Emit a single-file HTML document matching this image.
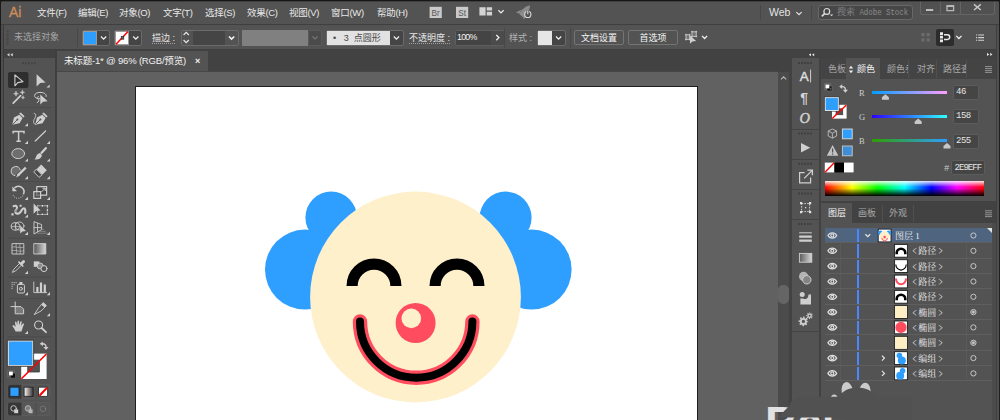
<!DOCTYPE html>
<html lang="zh-CN">
<head>
<meta charset="utf-8">
<title>Illustrator</title>
<style>
*{box-sizing:border-box;margin:0;padding:0}
html,body{width:1000px;height:420px;overflow:hidden;background:#535353}
body{position:relative;font-family:"Liberation Sans","Noto Sans CJK SC",sans-serif;font-size:11px;color:#e6e6e6;line-height:1}
.a{position:absolute}
.t{position:absolute;white-space:nowrap;line-height:14px;height:14px}
svg{position:absolute;overflow:visible}
/* frame */
#topline{left:0;top:0;width:1000px;height:2px;background:rgba(40,40,40,.45);border-top:1px solid #161616}
#leftline{left:0;top:0;width:1px;height:420px;background:#1c1c1c}
#leftstrip{left:1px;top:25px;width:3px;height:395px;background:#4e4e4e;border-right:1px solid #3a3a3a}
#rightstrip{left:996px;top:25px;width:3px;height:395px;background:#505050;border-left:1px solid #3f3f3f}
#menubar{left:0;top:1px;width:1000px;height:24px;background:#535353}
#sep1{left:0;top:24px;width:1000px;height:1px;background:#3f3f3f}
#ctrl{left:3px;top:25px;width:997px;height:24px;background:#535353}
#sep2{left:0;top:49px;width:1000px;height:1px;background:#3f3f3f}
#tabrow{left:3px;top:50px;width:997px;height:22px;background:#424242}
#canvas{left:57px;top:72px;width:721px;height:348px;background:#616161}
#artboard{left:135px;top:86px;width:563px;height:340px;background:#fff;border:1px solid #1e1e1e}
#doctab{left:57px;top:51px;width:151px;height:20px;background:#535353}
/* tools */
#tools{left:4px;top:58px;width:52px;height:362px;background:#535353}
#toolsgap{left:55px;top:50px;width:2px;height:370px;background:#3f3f3f}

.dim{color:#a6a6a6}
.f9{font-size:9px}
.box{position:absolute;border:1px solid #6b6b6b;border-radius:2px}
.dk{position:absolute;background:#454545}
.br{display:inline-block;transform:scale(.8,1.45);margin:0 1.4px 0 0.4px}
.br+.br,.t .br:last-child{margin:0 0 0 1.6px}
.chev{position:absolute;width:5px;height:5px}
.menu{top:6px;font-size:9.5px;color:#e8e8e8;letter-spacing:-0.3px}
</style>
</head>
<body>
<div class="a" id="menubar"></div>
<div class="a" id="ctrl"></div>
<div class="a" id="tabrow"></div>
<div class="a" id="canvas"></div>
<div class="a" id="artboard"></div>
<div class="a" id="doctab"></div>
<div class="a" id="tools"></div>
<div class="a" id="toolsgap"></div>
<div class="a" id="sep1"></div>
<div class="a" id="sep2"></div>
<div class="a" id="leftline"></div>
<div class="a" id="leftstrip"></div>

<!-- MENU -->
<div class="t" style="left:9px;top:2px;font-size:15.5px;line-height:18px;height:18px;color:#cb8c5c;letter-spacing:0;top:3px;transform:scaleX(.9);transform-origin:0 50%;-webkit-text-stroke:.35px #cb8c5c">Ai</div>
<div class="t menu" style="left:37px">文件(F)</div>
<div class="t menu" style="left:78px">编辑(E)</div>
<div class="t menu" style="left:119px">对象(O)</div>
<div class="t menu" style="left:163px">文字(T)</div>
<div class="t menu" style="left:205px">选择(S)</div>
<div class="t menu" style="left:247px">效果(C)</div>
<div class="t menu" style="left:289px">视图(V)</div>
<div class="t menu" style="left:331px">窗口(W)</div>
<div class="t menu" style="left:377px">帮助(H)</div>


<!-- top-right -->
<div class="a" style="left:760px;top:5px;width:1px;height:15px;background:#474747"></div>
<div class="a" style="left:811px;top:5px;width:1px;height:15px;background:#474747"></div>
<div class="t" style="left:769px;top:5px;font-size:10.5px;color:#e4e4e4">Web</div>
<div class="a" style="left:818px;top:5px;width:95px;height:15px;background:#474747;border:1px solid #686868;border-radius:3px"></div>
<div class="t" style="left:837px;top:6px;font-size:9px;color:#8c8c8c;font-family:'Liberation Mono','Noto Serif CJK SC',monospace">搜索<span style="display:inline-block;transform:scaleX(.82);transform-origin:0 50%;white-space:pre"> Adobe Stock</span></div>
<div class="a" style="left:920px;top:0;width:75px;height:15px;background:#515151;border:1px solid #656565;border-top:none;border-radius:0 0 3px 3px"></div>
<div class="a" style="left:940px;top:0;width:1px;height:14px;background:#646464"></div>
<div class="a" style="left:960px;top:0;width:1px;height:14px;background:#646464"></div>

<!-- CONTROL BAR -->
<div class="t dim f9" style="left:14px;top:30px">未选择对象</div>
<div class="box" style="left:82px;top:30px;width:28px;height:16px;background:#454545"></div>
<div class="a" style="left:83px;top:31px;width:14px;height:14px;background:#2e9eff;border:1px solid #9a9a9a"></div>
<div class="box" style="left:114px;top:30px;width:28px;height:16px;background:#454545"></div>
<div class="a" style="left:115px;top:31px;width:14px;height:14px;background:#fff;border:1px solid #9a9a9a"></div>
<div class="t f9" style="left:152px;top:31px;border-bottom:1px dotted #a0a0a0;height:12.5px">描边 :</div>
<div class="box" style="left:181px;top:30px;width:58px;height:16px;background:#535353"></div>
<div class="dk" style="left:193px;top:31px;width:32px;height:14px"></div>
<div class="a" style="left:242px;top:30px;width:66px;height:16px;background:#808080"></div>
<div class="box" style="left:308px;top:30px;width:14px;height:16px;background:#4b4b4b;border-color:#5a5a5a"></div>
<div class="box" style="left:326px;top:30px;width:78px;height:16px;background:#454545"></div>
<div class="a" style="left:327px;top:31px;width:63px;height:14px;background:#e2e2e2"></div>
<div class="t f9" style="left:333px;top:31px;color:#484848">•&nbsp;&nbsp; 3&nbsp; 点圆形</div>
<div class="t f9" style="left:409px;top:31px;border-bottom:1px dotted #a0a0a0;height:12.5px">不透明度 :</div>
<div class="box" style="left:455px;top:30px;width:50px;height:16px;background:#4b4b4b;border-color:#5e5e5e"></div><div class="a" style="left:456px;top:31px;width:35px;height:14px;background:#444"></div>
<div class="t" style="left:457px;top:30px;font-size:8.8px;letter-spacing:-0.75px;color:#f4f4f4">100%</div>
<div class="a" style="left:504px;top:28px;width:1px;height:20px;background:#474747"></div>
<div class="t f9" style="left:509px;top:31px;color:#b4b4b4">样式 :</div>
<div class="box" style="left:537px;top:30px;width:29px;height:16px;background:#454545"></div>
<div class="a" style="left:538px;top:31px;width:14px;height:14px;background:#e6e6e6"></div>
<div class="a" style="left:570px;top:28px;width:1px;height:20px;background:#474747"></div>
<div class="box" style="left:574px;top:30px;width:50px;height:15px;border-color:#747474"></div>
<div class="t f9" style="left:574px;top:31px;width:50px;text-align:center;color:#f4f4f4">文档设置</div>
<div class="box" style="left:628px;top:30px;width:50px;height:15px;border-color:#747474"></div>
<div class="t f9" style="left:628px;top:31px;width:50px;text-align:center;color:#f4f4f4">首选项</div>
<div class="a" style="left:936px;top:29px;width:18px;height:17px;background:#2c2c2c;border-radius:2px"></div>

<!-- DOC TAB -->
<div class="t" style="left:64px;top:54px;font-size:9.5px;color:#f2f2f2;letter-spacing:-0.18px">未标题-1* @ 96% (RGB/预览)</div>
<div class="t" style="left:195px;top:54px;font-size:9px;font-weight:bold;color:#f2f2f2">×</div>
<div class="a" style="left:57px;top:71px;width:721px;height:1px;background:#474747"></div>

<!-- RIGHT SIDE -->
<div class="a" style="left:778px;top:72px;width:11px;height:348px;background:#4b4b4b"></div>
<div class="a" style="left:778px;top:285px;width:11px;height:19px;background:#656565;border-radius:5px"></div>
<div class="a" style="left:789px;top:50px;width:3px;height:370px;background:#424242"></div>
<div class="a" style="left:792px;top:58px;width:27px;height:362px;background:#535353"></div>
<div class="a" style="left:792px;top:129px;width:27px;height:1px;background:#444"></div>
<div class="a" style="left:792px;top:159px;width:27px;height:1px;background:#444"></div>
<div class="a" style="left:792px;top:189px;width:27px;height:1px;background:#444"></div>
<div class="a" style="left:792px;top:219px;width:27px;height:1px;background:#444"></div>
<div class="a" style="left:792px;top:331px;width:27px;height:1px;background:#444"></div>
<div class="a" style="left:819px;top:50px;width:2px;height:370px;background:#424242"></div>
<!-- color panel -->
<div class="a" style="left:821px;top:58px;width:179px;height:21px;background:#444"></div>
<div class="a" style="left:821px;top:79px;width:179px;height:122px;background:#535353"></div>
<div class="a" style="left:846px;top:58px;width:34px;height:22px;background:#535353"></div>
<div class="a" style="left:821px;top:201px;width:179px;height:2px;background:#424242"></div>
<div class="a" style="left:908px;top:60px;width:1px;height:18px;background:#505050"></div>
<div class="a" style="left:936px;top:60px;width:1px;height:18px;background:#505050"></div>
<div class="a" style="left:966px;top:60px;width:1px;height:18px;background:#505050"></div>
<div class="t f9" style="left:828px;top:62px;color:#a8a8a8">色板</div>
<div class="t f9" style="left:857px;top:62px;color:#f4f4f4">颜色</div>
<div class="t f9" style="left:887px;top:62px;color:#a8a8a8;width:21px;overflow:hidden">颜色参</div>
<div class="t f9" style="left:917px;top:62px;color:#a8a8a8">对齐</div>
<div class="t f9" style="left:943px;top:62px;color:#a8a8a8;width:23px;overflow:hidden">路径查</div>
<div class="t" style="left:859px;top:86px;font-size:8.5px;color:#cdcdcd;font-family:'Liberation Serif',serif">R</div>
<div class="t" style="left:859px;top:110px;font-size:8.5px;color:#cdcdcd;font-family:'Liberation Serif',serif">G</div>
<div class="t" style="left:859px;top:134px;font-size:8.5px;color:#cdcdcd;font-family:'Liberation Serif',serif">B</div>
<div class="a" style="left:872px;top:91px;width:75px;height:3px;background:linear-gradient(90deg,#009eff,#ff9eff)"></div>
<div class="a" style="left:872px;top:115px;width:75px;height:3px;background:linear-gradient(90deg,#2e00ff,#2effff)"></div>
<div class="a" style="left:872px;top:139px;width:75px;height:3px;background:linear-gradient(90deg,#2e9e00,#2e9eff)"></div>
<div class="box" style="left:953px;top:85px;width:26px;height:15px;background:#454545;border-color:#5c5c5c"></div>
<div class="box" style="left:953px;top:109px;width:26px;height:15px;background:#454545;border-color:#5c5c5c"></div>
<div class="box" style="left:953px;top:134px;width:26px;height:15px;background:#454545;border-color:#5c5c5c"></div>
<div class="t f9" style="left:956px;top:85px;font-family:'Liberation Mono',monospace;letter-spacing:-0.5px">46</div>
<div class="t f9" style="left:956px;top:109px;font-family:'Liberation Mono',monospace;letter-spacing:-0.5px">158</div>
<div class="t f9" style="left:956px;top:134px;font-family:'Liberation Mono',monospace;letter-spacing:-0.5px">255</div>
<div class="t f9" style="left:944px;top:162px;font-family:'Liberation Mono',monospace;color:#c8c8c8">#</div>
<div class="box" style="left:951px;top:160px;width:34px;height:15px;background:#454545;border-color:#5c5c5c"></div>
<div class="t f9" style="left:954.5px;top:161px;font-family:'Liberation Mono',monospace;letter-spacing:-0.95px">2E9EFF</div>
<div class="a" style="left:825px;top:181px;width:159px;height:15px;background:linear-gradient(180deg,rgba(255,255,255,.9) 0%,rgba(255,255,255,0) 40%,rgba(0,0,0,0) 48%,#000 100%),linear-gradient(90deg,#f00 0%,#ff0 17%,#0f0 33%,#0ff 50%,#00f 67%,#f0f 83%,#f00 100%)"></div>
<!-- layers panel -->
<div class="a" style="left:821px;top:203px;width:179px;height:20px;background:#424242"></div>
<div class="a" style="left:821px;top:203px;width:31px;height:20px;background:#535353"></div>
<div class="a" style="left:882px;top:205px;width:1px;height:17px;background:#505050"></div>
<div class="a" style="left:913px;top:205px;width:1px;height:17px;background:#505050"></div>
<div class="a" style="left:821px;top:223px;width:179px;height:197px;background:#535353"></div>
<div class="a" style="left:992px;top:223px;width:8px;height:197px;background:#4b4b4b"></div>
<div class="t f9" style="left:828px;top:206px;color:#f4f4f4">图层</div>
<div class="t f9" style="left:858px;top:206px;color:#a8a8a8">画板</div>
<div class="t f9" style="left:889px;top:206px;color:#a8a8a8">外观</div>
<div class="a" style="left:825px;top:228px;width:167px;height:15px;background:#4f647f;border-bottom:1px solid #5f5f5f"></div>
<div class="a" style="left:857px;top:229px;width:2px;height:13px;background:#4a86ff"></div>
<div class="t f9" style="left:895px;top:229px;color:#f0f0f0;font-family:'Liberation Serif','Noto Serif CJK SC',serif">图层 1</div>
<div class="a" style="left:825px;top:243px;width:167px;height:16px;background:#535353;border-bottom:1px solid #5f5f5f"></div>
<div class="a" style="left:857px;top:244px;width:2px;height:14px;background:#4a86ff"></div>
<div class="t f9" style="left:911.5px;top:244px;color:#ececec;font-family:'Liberation Serif','Noto Serif CJK SC',serif"><span class="br">&lt;</span>路径<span class="br">&gt;</span></div>
<div class="a" style="left:825px;top:259px;width:167px;height:15px;background:#535353;border-bottom:1px solid #5f5f5f"></div>
<div class="a" style="left:857px;top:260px;width:2px;height:13px;background:#4a86ff"></div>
<div class="t f9" style="left:911.5px;top:260px;color:#ececec;font-family:'Liberation Serif','Noto Serif CJK SC',serif"><span class="br">&lt;</span>路径<span class="br">&gt;</span></div>
<div class="a" style="left:825px;top:274px;width:167px;height:15px;background:#535353;border-bottom:1px solid #5f5f5f"></div>
<div class="a" style="left:857px;top:275px;width:2px;height:13px;background:#4a86ff"></div>
<div class="t f9" style="left:911.5px;top:275px;color:#ececec;font-family:'Liberation Serif','Noto Serif CJK SC',serif"><span class="br">&lt;</span>路径<span class="br">&gt;</span></div>
<div class="a" style="left:825px;top:289px;width:167px;height:16px;background:#535353;border-bottom:1px solid #5f5f5f"></div>
<div class="a" style="left:857px;top:290px;width:2px;height:14px;background:#4a86ff"></div>
<div class="t f9" style="left:911.5px;top:290px;color:#ececec;font-family:'Liberation Serif','Noto Serif CJK SC',serif"><span class="br">&lt;</span>路径<span class="br">&gt;</span></div>
<div class="a" style="left:825px;top:305px;width:167px;height:15px;background:#535353;border-bottom:1px solid #5f5f5f"></div>
<div class="a" style="left:857px;top:306px;width:2px;height:13px;background:#4a86ff"></div>
<div class="t f9" style="left:911.5px;top:306px;color:#ececec;font-family:'Liberation Serif','Noto Serif CJK SC',serif"><span class="br">&lt;</span>椭圆<span class="br">&gt;</span></div>
<div class="a" style="left:825px;top:320px;width:167px;height:15px;background:#535353;border-bottom:1px solid #5f5f5f"></div>
<div class="a" style="left:857px;top:321px;width:2px;height:13px;background:#4a86ff"></div>
<div class="t f9" style="left:911.5px;top:321px;color:#ececec;font-family:'Liberation Serif','Noto Serif CJK SC',serif"><span class="br">&lt;</span>椭圆<span class="br">&gt;</span></div>
<div class="a" style="left:825px;top:335px;width:167px;height:16px;background:#535353;border-bottom:1px solid #5f5f5f"></div>
<div class="a" style="left:857px;top:336px;width:2px;height:14px;background:#4a86ff"></div>
<div class="t f9" style="left:911.5px;top:336px;color:#ececec;font-family:'Liberation Serif','Noto Serif CJK SC',serif"><span class="br">&lt;</span>椭圆<span class="br">&gt;</span></div>
<div class="a" style="left:825px;top:351px;width:167px;height:15px;background:#535353;border-bottom:1px solid #5f5f5f"></div>
<div class="a" style="left:857px;top:352px;width:2px;height:13px;background:#4a86ff"></div>
<div class="t f9" style="left:911.5px;top:352px;color:#ececec;font-family:'Liberation Serif','Noto Serif CJK SC',serif"><span class="br">&lt;</span>编组<span class="br">&gt;</span></div>
<div class="a" style="left:825px;top:366px;width:167px;height:15px;background:#535353;border-bottom:1px solid #5f5f5f"></div>
<div class="a" style="left:857px;top:367px;width:2px;height:13px;background:#4a86ff"></div>
<div class="t f9" style="left:911.5px;top:367px;color:#ececec;font-family:'Liberation Serif','Noto Serif CJK SC',serif"><span class="br">&lt;</span>编组<span class="br">&gt;</span></div>
<div class="a" style="left:840px;top:228px;width:1px;height:153px;background:#5f5f5f;opacity:.6"></div>
<div class="a" style="left:966px;top:228px;width:1px;height:153px;background:#5f5f5f;opacity:.6"></div>

<svg width="1000" height="420" viewBox="0 0 1000 420" style="left:0;top:0">
<defs>
<clipPath id="cv"><rect x="57" y="72" width="721" height="348"/></clipPath>
<linearGradient id="gr1" x1="0" x2="1" y1="0" y2="0"><stop offset="0" stop-color="#5a5a5a"/><stop offset="1" stop-color="#d8d8d8"/></linearGradient>
<linearGradient id="gr2" x1="0" x2="1" y1="0" y2="0"><stop offset="0" stop-color="#f4f4f4"/><stop offset="1" stop-color="#3a2f2f"/></linearGradient>
</defs>
<!-- ARTWORK -->
<g id="art" clip-path="url(#cv)">
<circle cx="331.2" cy="217.4" r="25.8" fill="#2e9eff"/>
<circle cx="305" cy="269.6" r="40" fill="#2e9eff"/>
<circle cx="505.6" cy="217.6" r="26" fill="#2e9eff"/>
<circle cx="531.6" cy="269.6" r="40" fill="#2e9eff"/>
<circle cx="415.5" cy="297" r="105.4" fill="#fff0cc"/>
<path d="M352.1,286 A21.9,21.9 0 0 1 395.9,286" fill="none" stroke="#000" stroke-width="11.2"/>
<path d="M435.1,286 A21.9,21.9 0 0 1 478.9,286" fill="none" stroke="#000" stroke-width="11.2"/>
<circle cx="415.6" cy="323" r="20" fill="#ff4d5f"/>
<circle cx="411.3" cy="318.4" r="9.8" fill="#fff0cc"/>
<path d="M360,321.5 A56.2,56.2 0 0 0 472.4,321.5" fill="none" stroke="#ff4d5f" stroke-width="14.4" stroke-linecap="round"/>
<path d="M360,321.5 A56.2,56.2 0 0 0 472.4,321.5" fill="none" stroke="#000" stroke-width="8" stroke-linecap="round"/>
</g>
<!-- TOOLS -->
<g id="tools-ic" fill="none" stroke="#cfcfcf" stroke-width="1.1" stroke-linejoin="round" stroke-linecap="round">
<g fill="#cfcfcf" stroke="none">
<path d="M9.5,53 L7,54.7 L9.5,56.4 Z M12.8,53 L10.3,54.7 L12.8,56.4 Z"/>
</g>
<path d="M22,63.2 H36" stroke="#454545" stroke-width="2" stroke-dasharray="2 1" stroke-linecap="butt"/>
<rect x="8" y="72" width="20.5" height="16" rx="2" fill="#2e2e2e" stroke="none"/>
<path d="M14.9,74.8 V85.8 L17.8,82.6 L23,81.6 Z"/>
<path d="M36.6,74.2 V86.4 L40.2,83 L45.6,82.4 Z" fill="#cfcfcf" stroke="none"/>
<!-- wand -->
<path d="M13.2,103.2 L20.6,95.6" stroke-width="1.7"/>
<path d="M16,91.39999999999999 Q16,93.8 18.4,93.8 Q16,93.8 16,96.2 Q16,93.8 13.6,93.8 Q16,93.8 16,91.39999999999999 Z M22.4,90.2 Q22.4,92.4 24.599999999999998,92.4 Q22.4,92.4 22.4,94.60000000000001 Q22.4,92.4 20.2,92.4 Q22.4,92.4 22.4,90.2 Z M23,96.1 Q23,97.6 24.5,97.6 Q23,97.6 23,99.1 Q23,97.6 21.5,97.6 Q23,97.6 23,96.1 Z" fill="#cfcfcf" stroke="#cfcfcf" stroke-width="0.5"/>
<!-- lasso -->
<path d="M39.5,98.6 C36,98.8 34.4,97.2 34.6,95.4 C34.9,93.2 38,92.2 41,92.4 C44.4,92.6 46.6,94.2 46.2,96.4 M38.6,96.6 C37,96.4 36.6,98.6 38.2,99 C39.6,99.4 39.2,101.8 37.2,102.6" stroke-width="1"/>
<path d="M40.3,94.4 V104.4 L43,101.8 L47.6,101.2 Z" fill="#cfcfcf" stroke="none"/>
<path d="M7.5,107.5 H51" stroke="#4b4b4b" stroke-width="1"/>
<!-- pen -->
<g id="pen" fill="#cfcfcf" stroke="none">
<path d="M12.2,124.8 L14,117.6 L19.4,114.8 L22.6,118 L19.6,123.2 Z M19.2,113.6 L20.8,112.4 L24.6,116.2 L23.4,117.6 Z"/>
<path d="M12.6,124.4 L17,120" stroke="#535353" stroke-width="0.9"/>
<circle cx="17.4" cy="119.6" r="1" fill="#535353"/>
</g>
<use href="#pen" x="23" y="0"/>
<path d="M34.2,113.4 C36.2,113.2 36.2,116 34.6,118.6 C33,121.4 33.2,124 35.6,124.4" stroke-width="0.9"/>
<!-- T -->
<path d="M13.2,133.6 V131.4 H24 V133.6 M18.6,131.4 V141 M16.4,141.2 H20.8" stroke-width="1.5" stroke-linecap="butt" stroke-linejoin="miter"/>
<path d="M35.2,141 L45.6,131" stroke-width="1.2"/>
<!-- ellipse -->
<ellipse cx="18.2" cy="153.6" rx="6.4" ry="5" fill="#6e6e6e" stroke-width="1"/>
<!-- brush -->
<path d="M45.8,148.2 L41.6,152.8" stroke-width="2.3"/>
<path d="M40.4,153.4 L42,155.2 C41.6,158.4 38.4,159.8 34.4,159.4 C36,158.4 35.8,156.6 36.8,155.2 C37.8,153.8 39.2,153.2 40.4,153.4 Z" fill="#cfcfcf" stroke="none"/>
<!-- shaper -->
<path d="M20.2,170 A4.6,4.6 0 1 0 15,175.6" fill="#6e6e6e" stroke-width="1"/>
<path d="M25.8,167.6 L17.8,175.4" stroke-width="2.2" stroke-linecap="butt"/>
<path d="M18,173.8 L19.8,175.6 L16,177.4 Z" fill="#cfcfcf" stroke="none"/>
<!-- eraser -->
<path d="M41.2,164.6 L46.8,170.2 L42.2,174.8 L36.6,169.2 Z" fill="#cfcfcf" stroke="none"/>
<path d="M36.6,169.4 L42,174.8 L39.2,177.4 L34,172.2 Z" fill="#535353" stroke="#cfcfcf" stroke-width="0.9"/>
<path d="M36.6,171.4 L39.8,174.6 L38.8,175.6 L35.6,172.4 Z" fill="#3e3e3e" stroke="none"/>
<path d="M7.5,181.5 H51" stroke="#4b4b4b" stroke-width="1"/>
<!-- rotate -->
<path d="M14.4,188 A5.6,5.6 0 0 1 23.4,194.4" stroke-width="1.5" stroke-linecap="butt"/>
<path d="M22.8,195.6 A5.6,5.6 0 0 1 12.8,194.6" stroke-width="1.1" stroke-dasharray="0.9 1.3" stroke-linecap="butt" opacity=".75"/>
<path d="M12.4,186.4 V191.2 H17 Z" fill="#cfcfcf" stroke="none"/>
<!-- scale -->
<rect x="36.8" y="186.6" width="9.8" height="8.6" stroke-width="1.2" fill="#474747"/>
<rect x="33.8" y="191.6" width="6.8" height="6.8" stroke-width="1.2" fill="#535353"/>
<path d="M36.8,195.2 V191.6 M40.6,195.2 H36.8" stroke-width="0.8" opacity=".6"/>
<path d="M41.6,191.8 L45,188.4 M42.8,188.2 H45.2 V190.6" stroke-width="1"/>
<!-- width tool -->
<path d="M13.6,206.2 C16.8,204.4 18.2,208 15.8,210.4 C14,212.4 16.4,214.4 19,213.2 C21.8,211.8 21.4,208.4 23.8,208.4 C25.6,208.4 25.4,211 25.2,213" stroke-width="2.1"/>
<path d="M13,213.6 L20.4,206.2" stroke-width="0.8" stroke="#535353"/><path d="M11.4,213.2 h2.2 v2.2 h-2.2 Z M19.6,204.8 h2 v2 h-2 Z" fill="#cfcfcf" stroke="none"/>
<!-- free transform -->
<rect x="37.6" y="205.8" width="9.8" height="8.6" stroke-width="0.9" stroke-dasharray="2 1.3" stroke="#bdbdbd"/>
<path d="M46.7,205.1 h1.4 v1.4 h-1.4 Z M46.7,209.4 h1.4 v1.4 h-1.4 Z M46.7,213.7 h1.4 v1.4 h-1.4 Z M41.8,205.1 h1.4 v1.4 h-1.4 Z M41.8,213.7 h1.4 v1.4 h-1.4 Z M36.9,213.7 h1.4 v1.4 h-1.4 Z" fill="#e4e4e4" stroke="none"/>
<path d="M33.6,203.6 V213.8 L36.4,211 L40.6,210.4 Z" fill="#cfcfcf" stroke="none"/>
<!-- shape builder -->
<ellipse cx="15.6" cy="226.4" rx="4.4" ry="3.8" stroke-width="0.9"/>
<ellipse cx="19.6" cy="226" rx="4.4" ry="4" stroke-width="0.9"/>
<path d="M11.4,226.6 H19 M15.6,222.8 V230" stroke-width="0.7"/>
<path d="M20.2,225.6 V233.4 L22.4,231.4 L26,231 Z" fill="#cfcfcf" stroke="none"/>
<!-- perspective -->
<path d="M34,222 V234 L41.6,229.6 V225 Z M34,227.6 H41.6 M37.6,223.4 V231.8" stroke-width="0.9"/>
<path d="M39.6,231.4 H45.4 M37,233.2 H47.4 M42,229.6 H43.6" stroke-width="0.6" stroke="#a0a0a0"/>
<path d="M7.5,238.2 H51" stroke="#4b4b4b" stroke-width="1"/>
<!-- mesh -->
<rect x="12.4" y="243.6" width="11.4" height="10.4" stroke-width="0.9"/>
<path d="M12.4,247 C16,246 20,249 23.8,247 M12.4,250.6 C16,249.6 20,252.6 23.8,250.6 M16.2,243.6 C15.2,247 17.6,250 16.2,254 M20,243.6 C19,247 21.4,250 20,254" stroke-width="0.6"/>
<rect x="34.2" y="243.6" width="11.6" height="10.4" fill="url(#gr1)" stroke-width="0.9"/>
<!-- eyedropper -->
<path d="M19.8,263.2 L13.8,269.2 L12.4,272.4 L15.6,271 L21.6,265" stroke-width="0.9"/>
<path d="M19,262.2 L22.8,266" stroke-width="1.7"/><path d="M21.4,263.8 L23.6,261.6" stroke-width="2.8"/>
<!-- blend -->
<rect x="33.8" y="261.4" width="5.6" height="5.4" fill="#cfcfcf" stroke="none"/>
<circle cx="40.2" cy="266" r="3" fill="#8a8a8a" stroke-width="0.9"/>
<circle cx="44" cy="268.6" r="3" fill="#535353" stroke-width="1"/>
<path d="M7.5,277.2 H51" stroke="#4b4b4b" stroke-width="1"/>
<!-- sprayer -->
<rect x="17.4" y="284.4" width="7" height="8.6" rx="1" stroke-width="1"/>
<rect x="19.4" y="282" width="3" height="2.4" fill="#cfcfcf" stroke="none"/>
<circle cx="20.9" cy="288.8" r="1.5" stroke-width="0.9"/>
<path d="M11.6,282.6 h1 M13.6,282.6 h1 M15.6,282.6 h1 M11.6,284.6 h1 M13.6,284.6 h1 M11.6,286.6 h1 M11.6,288.4 h1" stroke-width="1" stroke-linecap="butt"/>
<!-- graph -->
<path d="M33.8,281.6 V292.6 H47" stroke-width="0.9" stroke-linecap="butt"/>
<path d="M37.4,292.4 V287 M41,292.4 V282.4 M44.8,292.4 V284.6" stroke-width="2.2" stroke-linecap="butt"/>
<path d="M7.5,298.5 H51" stroke="#4b4b4b" stroke-width="1"/>
<!-- artboard -->
<path d="M15.2,313.4 V306.6 H21 L23.6,309.2 V313.4 Z" fill="#7a7a7a" stroke-width="1"/>
<path d="M15.2,302 V307 M11,306.6 H16" stroke-width="1"/>
<!-- slice -->
<path d="M43.4,302.8 L46.4,305.6 L41,311 L34.2,314.6 L38.4,308.2 Z" stroke-width="0.9"/>
<path d="M43.4,302.8 L46.4,305.6 L44.4,307.6 L41.4,304.8 Z" fill="#cfcfcf" stroke="none"/>
<!-- hand -->
<path d="M15.6,331.4 C14.6,329 13.6,327.6 12.6,326.4 C12.2,325.4 13.4,324.8 14.2,325.6 L15.6,327 L15,322.4 C14.9,321.4 16.3,321.2 16.5,322.2 L17.2,325.2 L17.5,321.2 C17.6,320.2 19,320.2 19,321.2 L19.1,325.2 L20.3,321.8 C20.6,320.9 21.9,321.3 21.7,322.2 L21,326 L22.6,323.8 C23.2,323 24.4,323.7 23.9,324.6 C22.6,327.2 22.4,329.4 21.4,331.4 Z" fill="#cfcfcf" stroke="none"/>
<!-- zoom -->
<circle cx="38.6" cy="325" r="4" stroke-width="1.1"/>
<path d="M41.6,328 L46,332.2" stroke-width="1.8"/>
<path d="M7.5,336.8 H51" stroke="#4b4b4b" stroke-width="1"/>
<g fill="#cfcfcf" stroke="none"><path d="M49.7,84.39999999999999 V87.6 H46.5 Z" fill="#cfcfcf"/><path d="M28,123.1 V126.3 H24.8 Z" fill="#cfcfcf"/><path d="M28,140.8 V144 H24.8 Z" fill="#cfcfcf"/><path d="M50,140.8 V144 H46.8 Z" fill="#cfcfcf"/><path d="M28,158.4 V161.6 H24.8 Z" fill="#cfcfcf"/><path d="M50,158.4 V161.6 H46.8 Z" fill="#cfcfcf"/><path d="M28,176.0 V179.2 H24.8 Z" fill="#cfcfcf"/><path d="M50,176.0 V179.2 H46.8 Z" fill="#cfcfcf"/><path d="M28,196.8 V200 H24.8 Z" fill="#cfcfcf"/><path d="M50,196.8 V200 H46.8 Z" fill="#cfcfcf"/><path d="M28,214.4 V217.6 H24.8 Z" fill="#cfcfcf"/><path d="M28,231.8 V235 H24.8 Z" fill="#cfcfcf"/><path d="M50,231.8 V235 H46.8 Z" fill="#cfcfcf"/><path d="M28,270.8 V274 H24.8 Z" fill="#cfcfcf"/><path d="M28,292.0 V295.2 H24.8 Z" fill="#cfcfcf"/><path d="M50,292.0 V295.2 H46.8 Z" fill="#cfcfcf"/><path d="M50,313.0 V316.2 H46.8 Z" fill="#cfcfcf"/><path d="M28,330.8 V334 H24.8 Z" fill="#cfcfcf"/></g>
<!-- fill / stroke -->
<rect x="21.2" y="353.6" width="25.4" height="25.4" fill="#fff" stroke="none"/>
<rect x="28" y="360.2" width="11.4" height="11.8" fill="#535353" stroke="#3a3a3a" stroke-width="0.8"/>
<path d="M46.4,354 L21.4,378.8" stroke="#f00" stroke-width="1.6" stroke-linecap="butt"/>
<rect x="7.6" y="340.2" width="26" height="26.2" fill="#d4d4d4" stroke="#333" stroke-width="0.8"/>
<rect x="9" y="341.6" width="23.2" height="23.4" fill="#2e9eff" stroke="none"/>
<path d="M42.2,343.8 Q46,343.6 46,347.2" stroke-width="1.4"/><path d="M39.8,343.8 L42.8,341.4 V346.2 Z M46,350 L43.4,347 H48.6 Z" fill="#cfcfcf" stroke="none"/>
<rect x="7.8" y="370.4" width="6.5" height="6.5" fill="none" stroke="#6c6c6c" stroke-width="0.7"/><rect x="10.5" y="373.2" width="5" height="5" fill="#0c0c0c" stroke="#6c6c6c" stroke-width="0.7"/><rect x="9" y="371.6" width="3.8" height="3.8" fill="#fff" stroke="none"/>
<!-- color mode -->
<rect x="8" y="384.8" width="42" height="14" rx="2" fill="#565656" stroke="#5f5f5f" stroke-width="0.8"/>
<path d="M8,386.8 a2,2 0 0 1 2,-2 H21.4 V398.8 H10 a2,2 0 0 1 -2,-2 Z" fill="#363636" stroke="none"/>
<path d="M36,385 V398.6" stroke="#4a4a4a" stroke-width="0.8"/>
<rect x="10.2" y="387.2" width="8.8" height="9.2" fill="#2e9eff" stroke="#222" stroke-width="0.8"/>
<rect x="24.4" y="387.2" width="8.8" height="9.2" fill="url(#gr2)" stroke="#222" stroke-width="0.8"/>
<rect x="38.8" y="387.2" width="8.8" height="9.2" fill="#fff" stroke="#222" stroke-width="0.8"/>
<path d="M39.4,395.8 L47,387.8" stroke="#f00" stroke-width="2" stroke-linecap="butt"/>
<!-- draw mode -->
<rect x="8" y="402.6" width="42" height="13" rx="2" fill="#565656" stroke="#5f5f5f" stroke-width="0.8"/>
<path d="M8,404.6 a2,2 0 0 1 2,-2 H21.4 V415.6 H10 a2,2 0 0 1 -2,-2 Z" fill="#363636" stroke="none"/>
<path d="M36,403 V415.4" stroke="#4a4a4a" stroke-width="0.8"/>
<circle cx="13.6" cy="408.4" r="2.8" stroke-width="0.9"/><rect x="14.2" y="409.4" width="4" height="3.8" fill="#cfcfcf" stroke="none"/>
<g opacity=".8"><circle cx="28" cy="408.4" r="2.8" stroke-width="0.9" fill="#888"/><rect x="28.6" y="409.4" width="4" height="3.8" fill="#cfcfcf" stroke="none"/></g>
<g opacity=".25"><circle cx="43" cy="408.8" r="2.8" stroke-width="0.9"/></g>
</g>
<g id="ic2" stroke-linejoin="miter">
<rect x="429.6" y="6.8" width="12.2" height="11.2" fill="#c9c9c9"/><rect x="456" y="6.8" width="12.2" height="11.2" fill="#c9c9c9"/>
<text x="435.7" y="15.6" font-size="8.2" text-anchor="middle" fill="#555" font-family="Liberation Sans, sans-serif">Br</text><text x="462.1" y="15.6" font-size="8.2" text-anchor="middle" fill="#555" font-family="Liberation Sans, sans-serif">St</text>
<path d="M479.4,7.2 h6.2 v8.2 h-6.2 Z M486.7,7.2 h5.4 v3.4 h-5.4 Z M486.7,11.7 h5.4 v3.7 h-5.4 Z" fill="#d2d2d2"/>
<path d="M498.4,10.299999999999999 L501,12.9 L503.6,10.299999999999999" stroke="#e8e8e8" stroke-width="1.3" fill="none"/>
<g fill="#8c8c8c"><path d="M530,5.6 C526,6 521.6,9.4 519.4,14 L522.6,17 C527,14.6 530,10 530,5.6 Z"/><path d="M521.4,9.6 L516,12.6 L519.6,13.8 Z M526.8,14.6 L524,19.4 L522.8,16.4 Z"/></g>
<circle cx="527.8" cy="14.4" r="3.1" fill="#535353" stroke="#dadada" stroke-width="1.1"/><path d="M527.8,10.4 V14.4" stroke="#535353" stroke-width="2.6"/><path d="M527.8,10.6 V14.2" stroke="#dadada" stroke-width="1.1"/>
<path d="M796.4,12.1 L799,14.700000000000001 L801.6,12.1" stroke="#e0e0e0" stroke-width="1.3" fill="none"/>
<circle cx="826.8" cy="11.4" r="2.9" fill="none" stroke="#dcdcdc" stroke-width="1.2"/><path d="M824.6,13.6 L821.8,16.4" stroke="#dcdcdc" stroke-width="1.6"/><path d="M830,14.4 h3.2 l-1.6,1.8 Z" fill="#dcdcdc"/>
<path d="M926,10 H933.2" stroke="#bdbdbd" stroke-width="2"/><path d="M947,5.6 H953.6 V10.6 H947 Z" fill="none" stroke="#b8b8b8" stroke-width="1.3"/><path d="M947,6 H953.6" stroke="#b8b8b8" stroke-width="2"/><path d="M974,4.4 L980.8,10 M980.8,4.4 L974,10" stroke="#c6c6c6" stroke-width="1.5"/>
<path d="M7.6,30.4 V44.8" stroke="#444" stroke-width="2" stroke-dasharray="1.6 1"/>
<path d="M77.5,28 V47" stroke="#474747" stroke-width="1"/>
<path d="M101.0,36.5 L103.6,39.099999999999994 L106.19999999999999,36.5" stroke="#f0f0f0" stroke-width="1.3" fill="none"/><path d="M133.20000000000002,36.5 L135.8,39.099999999999994 L138.4,36.5" stroke="#f0f0f0" stroke-width="1.3" fill="none"/>
<path d="M116,44.2 L128,31.6" stroke="#f00" stroke-width="1.5"/><rect x="121.2" y="36.6" width="2.6" height="2.6" fill="#666" stroke="#222" stroke-width="0.6"/>
<path d="M183.6,35 L186.2,32.4 L188.8,35" stroke="#e8e8e8" stroke-width="1.2" fill="none"/><path d="M183.6,40 L186.2,42.6 L188.8,40" stroke="#e8e8e8" stroke-width="1.2" fill="none"/>
<path d="M229.0,36.5 L231.6,39.099999999999994 L234.2,36.5" stroke="#f4f4f4" stroke-width="1.6" fill="none"/>
<path d="M312.4,36.300000000000004 L315,38.9 L317.6,36.300000000000004" stroke="#7a7a7a" stroke-width="1.1" fill="none"/>
<path d="M393.79999999999995,36.5 L396.4,39.099999999999994 L399.0,36.5" stroke="#f0f0f0" stroke-width="1.3" fill="none"/>
<path d="M496.3,35.0 L498.90000000000003,37.6 L496.3,40.2" stroke="#f0f0f0" stroke-width="1.3" fill="none"/>
<path d="M556.0,36.5 L558.6,39.099999999999994 L561.2,36.5" stroke="#f0f0f0" stroke-width="1.3" fill="none"/>
<rect x="686" y="34.8" width="3.6" height="4.6" fill="#6e6e6e"/><path d="M686,33.8 V40.4 M689.6,33.8 V40.4 M685.0,34.8 H690.6 M685.0,39.4 H690.6" stroke="#cfcfcf" stroke-width="0.9" fill="none"/><rect x="692" y="31.8" width="4.2" height="4.6" fill="#6e6e6e"/><path d="M692,30.8 V37.4 M696.2,30.8 V37.4 M691.0,31.8 H697.2 M691.0,36.4 H697.2" stroke="#cfcfcf" stroke-width="0.9" fill="none"/><path d="M690,35.6 V43.8 L692.4,41.6 L696.2,41 Z" fill="#cfcfcf"/>
<path d="M702.0,35.9 L704.6,38.5 L707.2,35.9" stroke="#f0f0f0" stroke-width="1.3" fill="none"/>
<path d="M921.4,33 h3.2 v3.2 h-3.2 Z M926.6,33 h3.2 v3.2 h-3.2 Z M921.4,38.2 h3.2 v3.2 h-3.2 Z M926.6,38.2 h3.2 v3.2 h-3.2 Z" fill="#6c6c6c"/>
<path d="M940,32.2 h3 v2.8 h-3 Z M940,35.8 h3 v2.8 h-3 Z M940,39.4 h3 v2.8 h-3 Z" fill="#e8e8e8"/><path d="M944,34.8 H947.4 A2.3,2.3 0 0 1 947.4,39.4 H944" fill="none" stroke="#e8e8e8" stroke-width="1.5"/>
<path d="M956.3,35.900000000000006 L958.9,38.5 L961.5,35.900000000000006" stroke="#f0f0f0" stroke-width="1.3" fill="none"/>
<path d="M976,35 h1.2 M978.2,35 H984 M976,37.6 h1.2 M978.2,37.6 H984 M976,40.2 h1.2 M978.2,40.2 H984" stroke="#d4d4d4" stroke-width="1.1"/>
<path d="M781,79.4 L783.6,76.8 L786.2,79.4" stroke="#b8b8b8" stroke-width="1.1" fill="none"/>
<path d="M811,53.2 L808.8,54.7 L811,56.2 Z M814.2,53.2 L812,54.7 L814.2,56.2 Z" fill="#e6e6e6"/>
<path d="M987,52.8 L989.2,54.4 L987,56 Z M990.2,52.8 L992.4,54.4 L990.2,56 Z" fill="#e6e6e6"/>
<path d="M798,63 H812" stroke="#404040" stroke-width="2" stroke-dasharray="2 1"/>
<path d="M798,133.6 H812" stroke="#404040" stroke-width="2" stroke-dasharray="2 1"/>
<path d="M798,163.8 H812" stroke="#404040" stroke-width="2" stroke-dasharray="2 1"/>
<path d="M798,193.4 H812" stroke="#404040" stroke-width="2" stroke-dasharray="2 1"/>
<path d="M798,224 H812" stroke="#404040" stroke-width="2" stroke-dasharray="2 1"/>
<text x="799.7" y="81" font-size="13.4" fill="#dedede" stroke="#dedede" stroke-width="0.45" font-family="Liberation Sans, sans-serif">A</text><path d="M810.6,69.6 V82.4" stroke="#dedede" stroke-width="0.9"/>
<text x="800.2" y="103.2" font-size="14" fill="#d4d4d4" font-weight="bold" font-family="Liberation Sans, sans-serif">¶</text>
<text x="799.6" y="122.6" font-size="14.5" fill="#d0d0d0" stroke="#d0d0d0" stroke-width="0.5" font-style="italic" font-family="Liberation Serif, serif">O</text>
<path d="M801,143 V152.4 L810.2,147.7 Z" fill="#cfcfcf"/>
<path d="M804.6,172.6 H799.6 V182.8 H810.6 V177.6" fill="none" stroke="#cfcfcf" stroke-width="1.2"/><path d="M804.2,178.4 L812,170.6 M807.4,170.2 H812.4 V175.2" fill="none" stroke="#cfcfcf" stroke-width="1.3"/>
<rect x="801.6" y="203.6" width="8" height="8" fill="none" stroke="#cfcfcf" stroke-width="1" stroke-dasharray="1.6 1.2"/><path d="M800,202 h2.2 v2.2 h-2.2 Z M809,202 h2.2 v2.2 h-2.2 Z M800,211 h2.2 v2.2 h-2.2 Z M809,211 h2.2 v2.2 h-2.2 Z M805,207 h1.2 v1.2 h-1.2 Z" fill="#e0e0e0"/>
<path d="M799.2,232.8 H811.8" stroke="#cfcfcf" stroke-width="1"/><path d="M799.2,236.6 H811.8 M799.2,240.6 H811.8" stroke="#cfcfcf" stroke-width="2.1"/>
<rect x="799.4" y="253.4" width="12.4" height="8.8" fill="url(#gr1)" stroke="#cfcfcf" stroke-width="0.9"/>
<circle cx="803.6" cy="276.4" r="4.6" fill="#b4b4b4"/><circle cx="806.8" cy="279.8" r="4.2" fill="#848484" stroke="#cfcfcf" stroke-width="1"/>
<path d="M800.4,298.4 H803 A3.4,3.4 0 0 0 808.4,295.6 V294.6 H811 V304.4 H800.4 Z" fill="#cfcfcf"/><circle cx="802.2" cy="294.4" r="2.5" fill="#cfcfcf"/>
<circle cx="803.4" cy="321.4" r="4.0" fill="none" stroke="#cfcfcf" stroke-width="1.6" stroke-dasharray="1.571 1.571" stroke-dashoffset="0.785"/><circle cx="803.4" cy="321.4" r="2.6" fill="none" stroke="#cfcfcf" stroke-width="1.8"/>
<circle cx="809.6" cy="315.8" r="2.7" fill="none" stroke="#cfcfcf" stroke-width="1.2" stroke-dasharray="1.060 1.060" stroke-dashoffset="0.530"/><circle cx="809.6" cy="315.8" r="1.65" fill="none" stroke="#cfcfcf" stroke-width="1.2999999999999998"/>
<path d="M848.8,68.6 L851,65.8 L853.2,68.6 Z M848.8,70.4 L851,73.2 L853.2,70.4 Z" fill="#ececec"/>
<path d="M985,66.6 H992 M985,68.6 H992 M985,70.6 H992 M985,72.4 H992" stroke="#9c9c9c" stroke-width="0.9"/>
<path d="M985,210.8 H992 M985,212.8 H992 M985,214.8 H992 M985,216.6 H992" stroke="#9c9c9c" stroke-width="0.9"/>
<rect x="824.3" y="83.3" width="6.5" height="6.5" fill="none" stroke="#6c6c6c" stroke-width="0.7"/><rect x="827" y="86" width="5" height="5" fill="#0c0c0c" stroke="#6c6c6c" stroke-width="0.7"/><rect x="825.5" y="84.6" width="3.8" height="3.8" fill="#fff"/><path d="M829.6,89.2 H830.8 V87.8" stroke="#9a9a9a" stroke-width="0.7" fill="none"/>
<path d="M841.6,86.6 Q845.4,86.4 845.4,90" fill="none" stroke="#cfcfcf" stroke-width="1.4"/><path d="M839.2,86.6 L842.2,84.2 V89 Z M845.4,92.8 L842.8,89.8 H848 Z" fill="#cfcfcf"/>
<rect x="832" y="104.8" width="14.6" height="13.8" fill="#fff"/><rect x="836" y="108.8" width="6.8" height="6" fill="#535353" stroke="#333" stroke-width="0.6"/><path d="M846.4,105 L832.2,118.4" stroke="#f00" stroke-width="1.4"/>
<rect x="825.2" y="97.6" width="13.2" height="13" fill="#2e9eff" stroke="#ececec" stroke-width="1"/><rect x="824.5" y="96.9" width="14.6" height="14.4" fill="none" stroke="#3a3a3a" stroke-width="0.5"/>
<path d="M832.4,129 L836.6,131 V136 L832.4,138.2 L828.2,136 V131 Z M828.2,131 L832.4,133.2 L836.6,131 M832.4,133.2 V138.2" fill="none" stroke="#bdbdbd" stroke-width="0.9"/>
<rect x="842.4" y="129" width="9.8" height="9.8" fill="#2e9eff" stroke="#dcdcdc" stroke-width="0.9"/>
<path d="M832.6,145 L838.4,155.8 H826.8 Z" fill="#c4c4c4"/><path d="M832.6,148.6 V152.4 M832.6,153.4 V154.8" stroke="#535353" stroke-width="1.3"/>
<rect x="842.4" y="146" width="9.8" height="9.8" fill="#3d8ed6" stroke="#c8c8c8" stroke-width="0.9"/>
<rect x="824.8" y="162.6" width="9.6" height="9.8" fill="#fff"/><path d="M825,172.2 L834.2,162.8" stroke="#f00" stroke-width="1.4"/><rect x="834.4" y="162.6" width="9.6" height="9.8" fill="#000"/><rect x="844" y="162.6" width="9.6" height="9.8" fill="#fff"/>
<path d="M881.9,99.8 V97.2 L885.4,94.2 L888.9,97.2 V99.8 Z" fill="#c8c8c8"/><path d="M914.7,124.0 V121.4 L918.2,118.4 L921.7,121.4 V124.0 Z" fill="#c8c8c8"/><path d="M943.5,148.6 V146 L947,143 L950.5,146 V148.6 Z" fill="#c8c8c8"/>
<path d="M827.9,235.5 C829.8,231.9 834.8,231.9 836.7,235.5 C834.8,239.1 829.8,239.1 827.9,235.5 Z" fill="none" stroke="#dedede" stroke-width="1.2"/><circle cx="832.3" cy="235.5" r="1.5" fill="none" stroke="#dedede" stroke-width="1.2"/>
<circle cx="973.4" cy="235.5" r="2.6" fill="none" stroke="#d0d0d0" stroke-width="0.9"/>
<rect x="878.2" y="229.1" width="12.8" height="12.8" fill="#fff" stroke="#1c1c1c" stroke-width="0.9"/>
<circle cx="880.4" cy="232.9" r="2.3" fill="#2e9eff"/><circle cx="888.8" cy="232.9" r="2.3" fill="#2e9eff"/><circle cx="884.6" cy="236.1" r="5" fill="#fff0cc"/><circle cx="884.6" cy="237.1" r="1.3" fill="#ff4d5f"/><path d="M881.8,237.9 A2.8,2.8 0 0 0 887.4,237.9" fill="none" stroke="#ff4d5f" stroke-width="0.9"/>
<path d="M865.4,234.26500000000001 L867.8,236.665 L870.1999999999999,234.26500000000001" stroke="#e6e6e6" stroke-width="1.2" fill="none"/>
<path d="M827.9,250.8 C829.8,247.2 834.8,247.2 836.7,250.8 C834.8,254.4 829.8,254.4 827.9,250.8 Z" fill="none" stroke="#dedede" stroke-width="1.2"/><circle cx="832.3" cy="250.8" r="1.5" fill="none" stroke="#dedede" stroke-width="1.2"/>
<circle cx="973.4" cy="250.8" r="2.6" fill="none" stroke="#d0d0d0" stroke-width="0.9"/>
<rect x="894.6" y="244.4" width="12.8" height="12.8" fill="#fff" stroke="#1c1c1c" stroke-width="0.9"/>
<path d="M896.7,254.2 V253.0 A4.3,4.3 0 0 1 905.3,253.0 V254.2" fill="none" stroke="#000" stroke-width="2.6"/>
<path d="M827.9,266.1 C829.8,262.5 834.8,262.5 836.7,266.1 C834.8,269.7 829.8,269.7 827.9,266.1 Z" fill="none" stroke="#dedede" stroke-width="1.2"/><circle cx="832.3" cy="266.1" r="1.5" fill="none" stroke="#dedede" stroke-width="1.2"/>
<circle cx="973.4" cy="266.1" r="2.6" fill="none" stroke="#d0d0d0" stroke-width="0.9"/>
<rect x="894.6" y="259.7" width="12.8" height="12.8" fill="#fff" stroke="#1c1c1c" stroke-width="0.9"/>
<path d="M895.8,264.5 A5.2,5.6 0 0 0 906.2,264.5" fill="none" stroke="#000" stroke-width="1.1"/>
<path d="M827.9,281.5 C829.8,277.9 834.8,277.9 836.7,281.5 C834.8,285.1 829.8,285.1 827.9,281.5 Z" fill="none" stroke="#dedede" stroke-width="1.2"/><circle cx="832.3" cy="281.5" r="1.5" fill="none" stroke="#dedede" stroke-width="1.2"/>
<circle cx="973.4" cy="281.5" r="2.6" fill="none" stroke="#d0d0d0" stroke-width="0.9"/>
<rect x="894.6" y="275.1" width="12.8" height="12.8" fill="#fff" stroke="#1c1c1c" stroke-width="0.9"/>
<path d="M896.0,278.5 A5,5.8 0 0 0 906.0,278.5" fill="none" stroke="#ff4d5f" stroke-width="2"/>
<path d="M827.9,296.8 C829.8,293.2 834.8,293.2 836.7,296.8 C834.8,300.4 829.8,300.4 827.9,296.8 Z" fill="none" stroke="#dedede" stroke-width="1.2"/><circle cx="832.3" cy="296.8" r="1.5" fill="none" stroke="#dedede" stroke-width="1.2"/>
<circle cx="973.4" cy="296.8" r="2.6" fill="none" stroke="#d0d0d0" stroke-width="0.9"/>
<rect x="894.6" y="290.4" width="12.8" height="12.8" fill="#fff" stroke="#1c1c1c" stroke-width="0.9"/>
<path d="M896.7,300.2 V299.0 A4.3,4.3 0 0 1 905.3,299.0 V300.2" fill="none" stroke="#000" stroke-width="2.6"/>
<path d="M827.9,312.1 C829.8,308.5 834.8,308.5 836.7,312.1 C834.8,315.7 829.8,315.7 827.9,312.1 Z" fill="none" stroke="#dedede" stroke-width="1.2"/><circle cx="832.3" cy="312.1" r="1.5" fill="none" stroke="#dedede" stroke-width="1.2"/>
<circle cx="973.4" cy="312.1" r="2.7" fill="#777" stroke="#c8c8c8" stroke-width="0.9"/><circle cx="973.4" cy="312.1" r="1.4" fill="#c4c4c4"/>
<rect x="894.6" y="305.7" width="12.8" height="12.8" fill="#fff" stroke="#1c1c1c" stroke-width="0.9"/>
<rect x="895.1" y="306.2" width="11.8" height="11.8" fill="#fdeec4"/>
<path d="M827.9,327.4 C829.8,323.8 834.8,323.8 836.7,327.4 C834.8,331.0 829.8,331.0 827.9,327.4 Z" fill="none" stroke="#dedede" stroke-width="1.2"/><circle cx="832.3" cy="327.4" r="1.5" fill="none" stroke="#dedede" stroke-width="1.2"/>
<circle cx="973.4" cy="327.4" r="2.6" fill="none" stroke="#d0d0d0" stroke-width="0.9"/>
<rect x="894.6" y="321.0" width="12.8" height="12.8" fill="#fff" stroke="#1c1c1c" stroke-width="0.9"/>
<circle cx="901.0" cy="327.4" r="5.6" fill="#ff4d5f"/>
<path d="M827.9,342.8 C829.8,339.2 834.8,339.2 836.7,342.8 C834.8,346.4 829.8,346.4 827.9,342.8 Z" fill="none" stroke="#dedede" stroke-width="1.2"/><circle cx="832.3" cy="342.8" r="1.5" fill="none" stroke="#dedede" stroke-width="1.2"/>
<circle cx="973.4" cy="342.8" r="2.7" fill="#777" stroke="#c8c8c8" stroke-width="0.9"/><circle cx="973.4" cy="342.8" r="1.4" fill="#c4c4c4"/>
<rect x="894.6" y="336.4" width="12.8" height="12.8" fill="#fff" stroke="#1c1c1c" stroke-width="0.9"/>
<rect x="895.1" y="336.9" width="11.8" height="11.8" fill="#fdeec4"/>
<path d="M827.9,358.1 C829.8,354.5 834.8,354.5 836.7,358.1 C834.8,361.7 829.8,361.7 827.9,358.1 Z" fill="none" stroke="#dedede" stroke-width="1.2"/><circle cx="832.3" cy="358.1" r="1.5" fill="none" stroke="#dedede" stroke-width="1.2"/>
<circle cx="973.4" cy="358.1" r="2.6" fill="none" stroke="#d0d0d0" stroke-width="0.9"/>
<rect x="894.6" y="351.7" width="12.8" height="12.8" fill="#fff" stroke="#1c1c1c" stroke-width="0.9"/>
<circle cx="899.4" cy="355.5" r="2.8" fill="#2e9eff"/><circle cx="901.8" cy="360.5" r="4" fill="#2e9eff"/>
<path d="M881.95,355.605 L884.45,358.105 L881.95,360.605" stroke="#e6e6e6" stroke-width="1.2" fill="none"/>
<path d="M827.9,373.4 C829.8,369.8 834.8,369.8 836.7,373.4 C834.8,377.0 829.8,377.0 827.9,373.4 Z" fill="none" stroke="#dedede" stroke-width="1.2"/><circle cx="832.3" cy="373.4" r="1.5" fill="none" stroke="#dedede" stroke-width="1.2"/>
<circle cx="973.4" cy="373.4" r="2.6" fill="none" stroke="#d0d0d0" stroke-width="0.9"/>
<rect x="894.6" y="367.0" width="12.8" height="12.8" fill="#fff" stroke="#1c1c1c" stroke-width="0.9"/>
<circle cx="902.6" cy="370.8" r="2.8" fill="#2e9eff"/><circle cx="900.2" cy="375.8" r="4" fill="#2e9eff"/>
<path d="M881.95,370.93500000000006 L884.45,373.43500000000006 L881.95,375.93500000000006" stroke="#e6e6e6" stroke-width="1.2" fill="none"/>
<path d="M987,228 H992 V233 Z" fill="#e4e4e4"/>
</g>
<!--SVGMORE2-->
</svg>


<!-- watermark remnants -->
<svg width="1000" height="420" viewBox="0 0 1000 420" style="left:0;top:0">
<ellipse cx="847.5" cy="392" rx="5.8" ry="10" fill="#cbcbcb" transform="rotate(-10 847.5 392)"/>
<ellipse cx="864.4" cy="393" rx="6" ry="10.4" fill="#cbcbcb" transform="rotate(8 864.4 393)"/>
<ellipse cx="834.2" cy="399.6" rx="3.9" ry="5" fill="#cbcbcb"/>
</svg>
<div class="t" id="wm" style="left:765px;top:400px;font-size:46px;font-weight:bold;line-height:46px;height:46px;color:#e2e2e2;letter-spacing:-1px">Bai</div>
<svg width="1000" height="420" viewBox="0 0 1000 420" style="left:0;top:0">
<path d="M777.5,417.6 L781,414.2 L789.6,405.6 C790.5,400.5 795,397.2 802,396.8 H839 C842,391.5 849,387.6 857.5,387.6 C866,387.6 873,391.5 876,396.8 H912 V420 H844 V417.6 Z" fill="#515151"/>
</svg>
<div class="a" id="rightstrip"></div>
<div class="a" style="left:999px;top:0;width:1px;height:420px;background:#1e1e1e"></div>
<div class="a" style="left:0;top:0;width:4px;height:4px;background:radial-gradient(circle at 100% 100%,rgba(22,22,22,0) 3px,#161616 4px)"></div>
<div class="a" style="left:996px;top:0;width:4px;height:4px;background:radial-gradient(circle at 0 100%,rgba(22,22,22,0) 3px,#161616 4px)"></div>
<div class="a" id="topline"></div>
<!--MORE3-->


</body>
</html>
